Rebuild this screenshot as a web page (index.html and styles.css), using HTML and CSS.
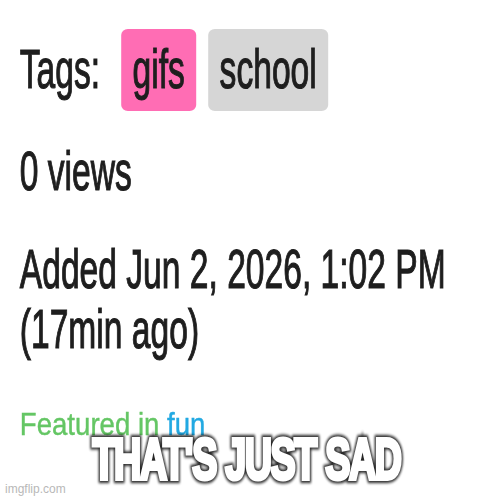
FILE: index.html
```html
<!DOCTYPE html>
<html>
  <head>
    <title>That's just sad</title>
    <link rel="stylesheet" href="styles.css">
  </head>
  <body>
    <div class="meme">
      <div class="page">
        <div class="tags">
          <span class="tags__label">Tags:</span>
          <span class="tag tag--pink">gifs</span>
          <span class="tag">school</span>
        </div>
        <p class="views">0 views</p>
        <p class="added">Added Jun 2, 2026, 1:02 PM (17min ago)</p>
        <p class="featured"><span class="featured__text">Featured in <span class="featured__link">fun</span></span></p>
      </div>

      <div class="caption"><span class="caption__text" data-text="THAT'S JUST SAD">THAT'S JUST SAD</span></div>
      <div class="watermark">imgflip.com</div>
    </div>
  </body>
</html>
```

FILE: styles.css
```css
body { margin: 0; background: #fff; font-family: "Liberation Sans", Arial, sans-serif; }

.meme {
  position: relative;
  width: 500px;
  height: 500px;
  overflow: hidden;
  background: #fff;
}

/* the screenshot was squeezed sideways, so the whole page is scaled on x */
.page {
  width: 833px;
  box-sizing: border-box;
  padding: 29px 0 0 33px;
  transform: scaleX(0.6);
  transform-origin: top left;
  color: #1e1e1e;
  font-size: 56px;
  -webkit-text-stroke: 1.2px #1e1e1e;
  filter: blur(0.4px);
}

.tags { display: flex; height: 82px; line-height: 80px; }
.tags__label { margin-right: 35px; }
.tag {
  padding: 0 19px;
  margin-right: 20px;
  background: #d6d6d6;
  border-radius: 11px / 6px;
}
.tag--pink { background: #ff6db4; }

.views { margin: 30px 0 0; line-height: 60px; }
.added { margin: 38px 0 0; line-height: 60px; }

.featured { margin: 36px 0 0; height: 46px; }
.featured__text {
  display: inline-block;
  font-size: 46px;
  line-height: 46px;
  color: #64c664;
  -webkit-text-stroke: 0.6px #64c664;
  transform: scaleY(0.68);
  transform-origin: top left;
}
.featured__link { color: #22a9e2; -webkit-text-stroke: 0.6px #22a9e2; }

.caption {
  position: absolute;
  top: 431px;
  left: 0;
  right: 6px;
  text-align: center;
  line-height: 56px;
}
.caption__text {
  position: relative;
  display: inline-block;
  font-size: 57px;
  font-weight: bold;
  letter-spacing: -2px;
  color: #fff;
  -webkit-text-stroke: 4px #fff;
  transform: scaleX(0.66);
  z-index: 0;
}
/* dark outline drawn behind the white letters */
.caption__text::before {
  content: attr(data-text);
  position: absolute;
  left: 0;
  top: 0;
  z-index: -1;
  color: #000;
  -webkit-text-stroke: 8px #000;
  filter: blur(1.5px);
  opacity: 0.85;
}

.watermark {
  position: absolute;
  left: 5px;
  bottom: 4px;
  font-size: 12px;
  color: #b8b8b8;
}
```
